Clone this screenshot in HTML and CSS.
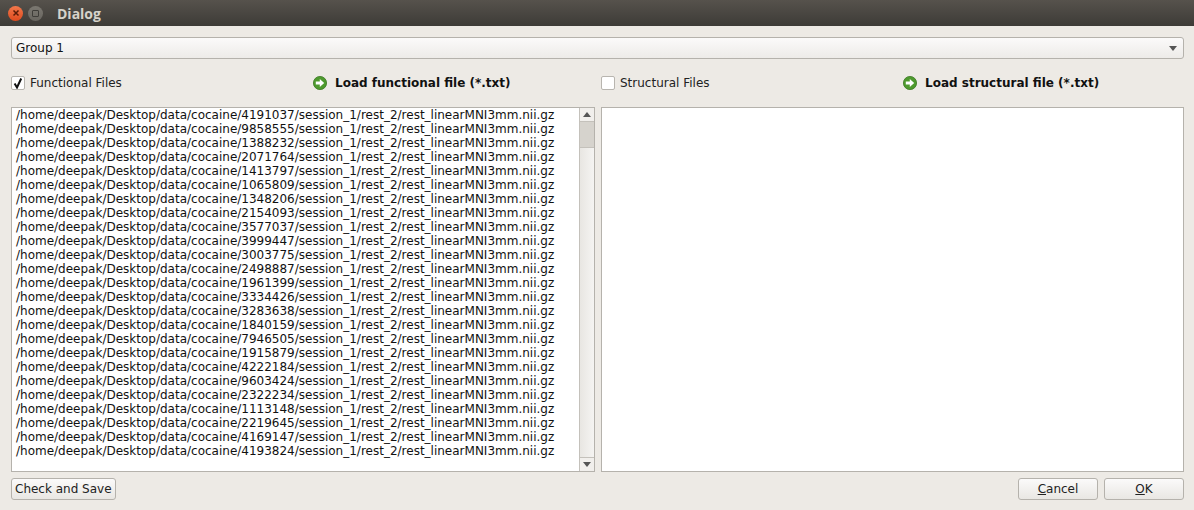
FILE: index.html
```html
<!DOCTYPE html>
<html lang="en">
<head>
    <meta charset="UTF-8">
    <title>Dialog</title>
    <link rel="stylesheet" href="styles.css">
</head>
<body>
    <div class="titlebar">
        <span class="win-btn win-close">
            <svg width="8" height="8" viewBox="0 0 8 8"><path d="M1.5 1.5l5 5M6.5 1.5l-5 5" stroke="#5a1c08" stroke-width="1.5"/></svg>
        </span>
        <span class="win-btn win-max"><span class="win-max-box"></span></span>
        <span class="title-text">Dialog</span>
    </div>
    <div class="content">
        <div class="combo">
            <span>Group 1</span>
            <span class="arrow-down"></span>
        </div>
        <div class="options">
            <div class="option-half">
                <label class="check-label"><span class="checkbox"><svg width="10" height="12" viewBox="0 0 10 12"><path d="M1.6 6.5L4 10.5L8.2 1.5" fill="none" stroke="#111" stroke-width="2"/></svg></span>Functional Files</label>
                <div class="load-btn">
                    <svg width="14" height="14" viewBox="0 0 14 14"><circle cx="7" cy="7" r="6.6" fill="#4e9a2e" stroke="#3b7a22" stroke-width=".8"/><path d="M2.8 5.6h4V3l4.4 4-4.4 4V8.4h-4z" fill="#fff"/></svg>
                    <span>Load functional file (*.txt)</span>
                </div>
            </div>
            <div class="option-half">
                <label class="check-label"><span class="checkbox"></span>Structural Files</label>
                <div class="load-btn">
                    <svg width="14" height="14" viewBox="0 0 14 14"><circle cx="7" cy="7" r="6.6" fill="#4e9a2e" stroke="#3b7a22" stroke-width=".8"/><path d="M2.8 5.6h4V3l4.4 4-4.4 4V8.4h-4z" fill="#fff"/></svg>
                    <span>Load structural file (*.txt)</span>
                </div>
            </div>
        </div>
        <div class="lists">
            <div class="listbox">
                <ul class="file-list">
                    <li>/home/deepak/Desktop/data/cocaine/4191037/session_1/rest_2/rest_linearMNI3mm.nii.gz</li>
                    <li>/home/deepak/Desktop/data/cocaine/9858555/session_1/rest_2/rest_linearMNI3mm.nii.gz</li>
                    <li>/home/deepak/Desktop/data/cocaine/1388232/session_1/rest_2/rest_linearMNI3mm.nii.gz</li>
                    <li>/home/deepak/Desktop/data/cocaine/2071764/session_1/rest_2/rest_linearMNI3mm.nii.gz</li>
                    <li>/home/deepak/Desktop/data/cocaine/1413797/session_1/rest_2/rest_linearMNI3mm.nii.gz</li>
                    <li>/home/deepak/Desktop/data/cocaine/1065809/session_1/rest_2/rest_linearMNI3mm.nii.gz</li>
                    <li>/home/deepak/Desktop/data/cocaine/1348206/session_1/rest_2/rest_linearMNI3mm.nii.gz</li>
                    <li>/home/deepak/Desktop/data/cocaine/2154093/session_1/rest_2/rest_linearMNI3mm.nii.gz</li>
                    <li>/home/deepak/Desktop/data/cocaine/3577037/session_1/rest_2/rest_linearMNI3mm.nii.gz</li>
                    <li>/home/deepak/Desktop/data/cocaine/3999447/session_1/rest_2/rest_linearMNI3mm.nii.gz</li>
                    <li>/home/deepak/Desktop/data/cocaine/3003775/session_1/rest_2/rest_linearMNI3mm.nii.gz</li>
                    <li>/home/deepak/Desktop/data/cocaine/2498887/session_1/rest_2/rest_linearMNI3mm.nii.gz</li>
                    <li>/home/deepak/Desktop/data/cocaine/1961399/session_1/rest_2/rest_linearMNI3mm.nii.gz</li>
                    <li>/home/deepak/Desktop/data/cocaine/3334426/session_1/rest_2/rest_linearMNI3mm.nii.gz</li>
                    <li>/home/deepak/Desktop/data/cocaine/3283638/session_1/rest_2/rest_linearMNI3mm.nii.gz</li>
                    <li>/home/deepak/Desktop/data/cocaine/1840159/session_1/rest_2/rest_linearMNI3mm.nii.gz</li>
                    <li>/home/deepak/Desktop/data/cocaine/7946505/session_1/rest_2/rest_linearMNI3mm.nii.gz</li>
                    <li>/home/deepak/Desktop/data/cocaine/1915879/session_1/rest_2/rest_linearMNI3mm.nii.gz</li>
                    <li>/home/deepak/Desktop/data/cocaine/4222184/session_1/rest_2/rest_linearMNI3mm.nii.gz</li>
                    <li>/home/deepak/Desktop/data/cocaine/9603424/session_1/rest_2/rest_linearMNI3mm.nii.gz</li>
                    <li>/home/deepak/Desktop/data/cocaine/2322234/session_1/rest_2/rest_linearMNI3mm.nii.gz</li>
                    <li>/home/deepak/Desktop/data/cocaine/1113148/session_1/rest_2/rest_linearMNI3mm.nii.gz</li>
                    <li>/home/deepak/Desktop/data/cocaine/2219645/session_1/rest_2/rest_linearMNI3mm.nii.gz</li>
                    <li>/home/deepak/Desktop/data/cocaine/4169147/session_1/rest_2/rest_linearMNI3mm.nii.gz</li>
                    <li>/home/deepak/Desktop/data/cocaine/4193824/session_1/rest_2/rest_linearMNI3mm.nii.gz</li>
                </ul>
                <div class="scrollbar">
                    <div class="scroll-btn"><span class="arrow-up"></span></div>
                    <div class="scroll-track"><div class="scroll-thumb"></div></div>
                    <div class="scroll-btn scroll-btn-end"><span class="arrow-down"></span></div>
                </div>
            </div>
            <div class="listbox"></div>
        </div>
        <div class="actions">
            <button class="btn">Check and Save</button>
            <div class="actions-right">
                <button class="btn btn-wide"><u>C</u>ancel</button>
                <button class="btn btn-wide"><u>O</u>K</button>
            </div>
        </div>
    </div>
</body>
</html>
```

FILE: styles.css
```css
html, body {
    margin: 0;
    height: 100%;
}

body {
    background-color: #edeae5;
    color: #111;
    font-family: "DejaVu Sans", sans-serif;
    font-size: 12px;
    overflow: hidden;
}

.titlebar {
    display: flex;
    align-items: center;
    height: 26px;
    padding-left: 8px;
    background: linear-gradient(to bottom, #56524c, #3d3b37);
}

.win-btn {
    display: flex;
    align-items: center;
    justify-content: center;
    width: 15px;
    height: 15px;
    border-radius: 50%;
    margin-right: 5px;
}

.win-close {
    background: linear-gradient(to bottom, #f2784b, #dd4a1e);
}

.win-max {
    background: linear-gradient(to bottom, #7b7871, #68655f);
}

.win-max-box {
    width: 5px;
    height: 5px;
    border: 1px solid #3f3d39;
    border-radius: 1px;
}

.title-text {
    margin-left: 9px;
    color: #d6d2c9;
    font-family: "Open Sans", sans-serif;
    font-size: 14px;
    font-weight: 700;
}

.content {
    padding: 11px 10px 0 11px;
}

.combo {
    display: flex;
    align-items: center;
    justify-content: space-between;
    box-sizing: border-box;
    height: 22px;
    padding: 0 6px 0 4px;
    border: 1px solid #b5b2ac;
    border-radius: 3px;
    background: linear-gradient(to bottom, #fbfafa, #edebe8);
}

.arrow-down, .arrow-up {
    width: 0;
    height: 0;
    border-left: 4px solid transparent;
    border-right: 4px solid transparent;
}

.arrow-down {
    border-top: 5px solid #555;
}

.arrow-up {
    border-bottom: 5px solid #555;
}

.options {
    display: grid;
    grid-template-columns: 584px 583px;
    column-gap: 6px;
    height: 14px;
    margin-top: 17px;
    margin-bottom: 17px;
}

.option-half {
    display: grid;
    grid-template-columns: 302px 1fr;
    align-items: center;
}

.check-label {
    display: flex;
    align-items: center;
    color: #222;
}

.checkbox {
    display: flex;
    align-items: center;
    justify-content: center;
    box-sizing: border-box;
    width: 14px;
    height: 14px;
    margin-right: 5px;
    border: 1px solid #b8b5af;
    border-radius: 2px;
    background-color: #fff;
}

.load-btn {
    display: flex;
    align-items: center;
    gap: 8px;
    font-weight: 700;
}

.lists {
    display: grid;
    grid-template-columns: 584px 583px;
    column-gap: 6px;
    height: 365px;
}

.listbox {
    display: flex;
    box-sizing: border-box;
    border: 1px solid #b5b2ac;
    background-color: #fff;
    overflow: hidden;
}

.file-list {
    flex: 1;
    margin: 0;
    padding: 0 0 0 4px;
    list-style: none;
}

.file-list li {
    height: 14px;
    line-height: 14px;
    white-space: nowrap;
}

.scrollbar {
    display: flex;
    flex-direction: column;
    width: 14px;
    border-left: 1px solid #c4c1bb;
    background-color: #f1efec;
}

.scroll-btn {
    display: flex;
    align-items: center;
    justify-content: center;
    height: 13px;
    border-bottom: 1px solid #c4c1bb;
}

.scroll-btn-end {
    border-top: 1px solid #c4c1bb;
    border-bottom: 0;
}

.scroll-track {
    flex: 1;
    background: linear-gradient(to right, #e8e6e2, #f5f4f2);
}

.scroll-thumb {
    height: 25px;
    border-bottom: 1px solid #c4c1bb;
    background-color: #d6d3cd;
}

.actions {
    display: flex;
    justify-content: space-between;
    margin-top: 6px;
}

.actions-right {
    display: flex;
    gap: 6px;
}

.btn {
    box-sizing: border-box;
    height: 22px;
    padding: 0 3px;
    border: 1px solid #b5b2ac;
    border-radius: 3px;
    background: linear-gradient(to bottom, #fbfafa, #e9e7e3);
    color: #222;
    font-family: "DejaVu Sans", sans-serif;
    font-size: 12px;
}

.btn-wide {
    width: 80px;
}
```
